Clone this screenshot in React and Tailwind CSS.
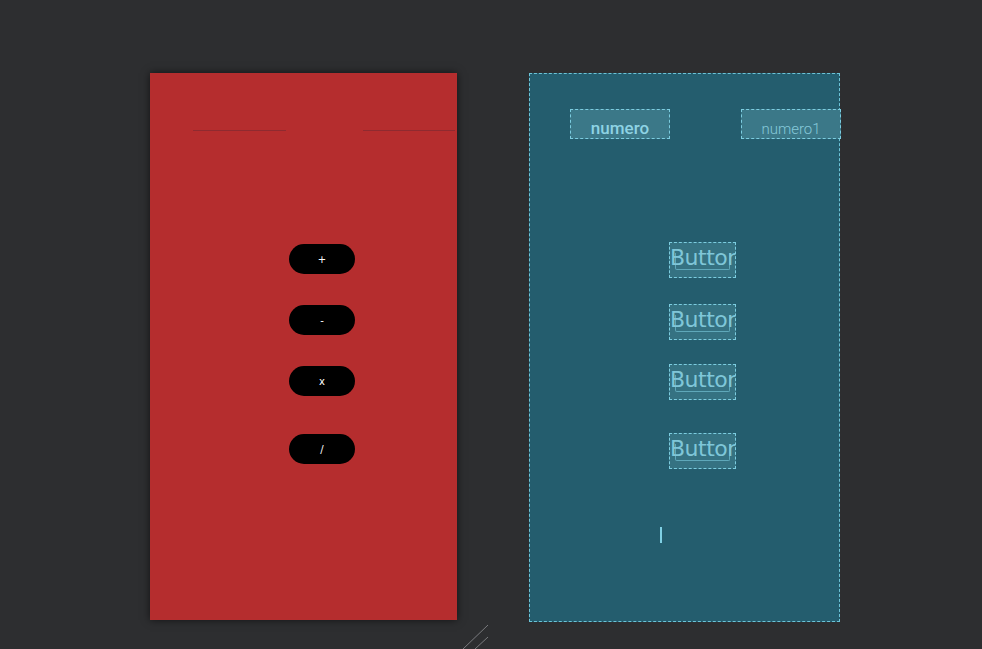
import React from 'react';

const ops = ['+', '-', 'x', '/'];
const opTops = ['mt-[113px]', 'mt-[31px]', 'mt-[31px]', 'mt-[38px]'];
const blueTops = ['mt-[103px]', 'mt-[26px]', 'mt-[24px]', 'mt-[33px]'];

const DesignPanel = () => (
  <div className="w-[307px] h-[547px] bg-[#b52d2e] shadow-[0_0_8px_rgba(0,0,0,0.6)] flex flex-col">
    {/* edit text underlines */}
    <div className="flex mt-[57px] h-px">
      <div className="ml-[43px] w-[93px] bg-[#8f2a30]" />
      <div className="ml-[77px] w-[92px] bg-[#8f2a30]" />
    </div>
    <div className="flex flex-col pl-[139px]">
      {ops.map((op, i) => (
        <div
          key={op}
          className={`${opTops[i]} w-[66px] h-[30px] rounded-full bg-black text-white text-[10px] flex items-center justify-center font-['DejaVu_Sans',sans-serif]`}
        >
          {op}
        </div>
      ))}
    </div>
  </div>
);

const BlueprintPanel = () => (
  <div className="relative w-[311px] h-[549px] bg-[#245d6e] border border-dashed border-[#6cc4d8] flex flex-col font-['Roboto',sans-serif]">
    <div className="flex mt-[35px]">
      <div className="ml-[40px] w-[100px] h-[30px] shrink-0 bg-[#3b7888] border border-dashed border-[#7ccde0] flex items-end justify-center pb-[1px] text-[17px] font-medium leading-none text-[#8ed3e4]">
        numero
      </div>
      <div className="ml-[71px] w-[100px] h-[30px] shrink-0 bg-[#3b7888] border border-dashed border-[#7ccde0] flex items-end justify-center pb-[1px] text-[15px] font-light leading-none text-[#86c9da]">
        numero1
      </div>
    </div>
    <div className="flex flex-col pl-[139px]">
      {ops.map((op, i) => (
        <div
          key={op}
          className={`${blueTops[i]} relative w-[67px] h-[36px] bg-[#357282] border border-dashed border-[#7ccde0] overflow-hidden`}
        >
          <div className="absolute left-[5px] right-[5px] top-[10px] h-[17px] border border-t-0 border-[#5fa8ba] rounded-b-[2px]" />
          <div className="absolute left-0 top-[1px] text-[22px] leading-[28px] whitespace-nowrap text-[#7fc6d8] font-['DejaVu_Sans',sans-serif] tracking-[-0.5px]">
            Button
          </div>
        </div>
      ))}
    </div>
    <div className="ml-[130px] mt-[58px] w-[2px] h-[16px] bg-[#7fd0e4]" />
  </div>
);

export default function App() {
  return (
    <div className="w-[982px] h-[649px] bg-[#2d2e30] overflow-hidden relative">
      <div className="flex pt-[73px] pl-[150px] gap-[72px]">
        <DesignPanel />
        <BlueprintPanel />
      </div>
      {/* resize handle */}
      <svg className="absolute left-[460px] top-[622px]" width="32" height="30" viewBox="0 0 32 30">
        <line x1="3" y1="27" x2="28" y2="3" stroke="#7a7b7e" strokeWidth="1" />
        <line x1="15" y1="27" x2="28" y2="15" stroke="#7a7b7e" strokeWidth="1" />
      </svg>
    </div>
  );
}
